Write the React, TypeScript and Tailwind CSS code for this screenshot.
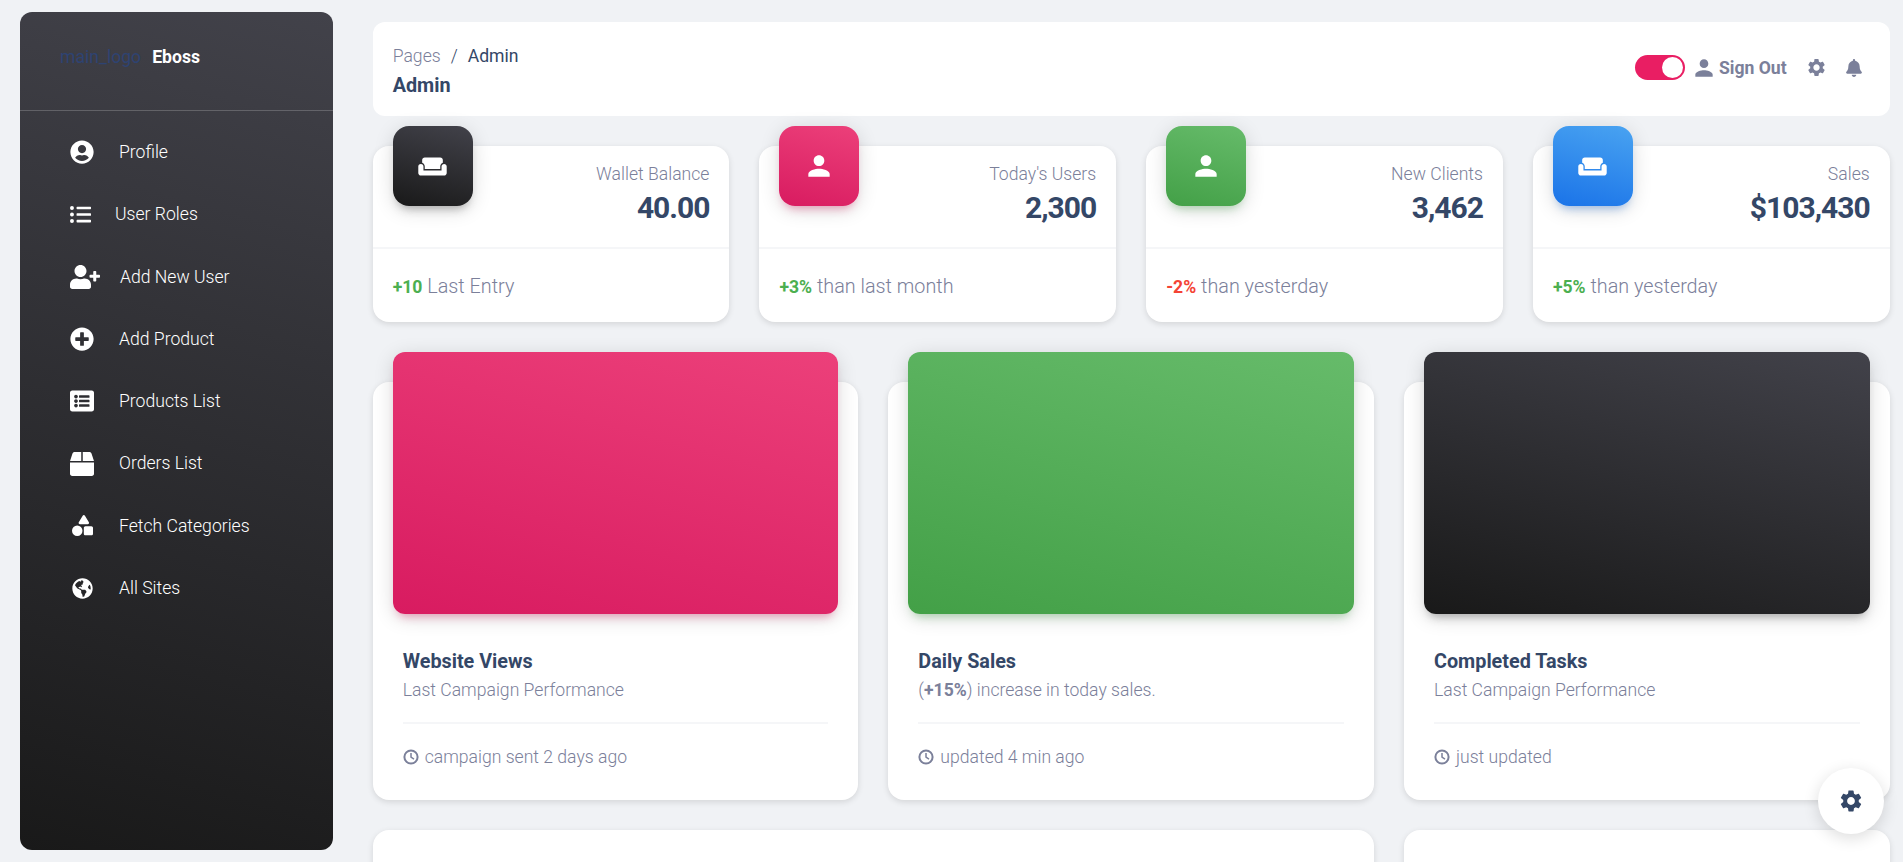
import React from "react";
import type { ReactNode } from "react";
import { FaUserCircle, FaListUl, FaUserPlus, FaPlusCircle, FaListAlt, FaBox, FaGlobeAmericas, FaBell } from "react-icons/fa";
import { FaShapes } from "react-icons/fa6";
import { MdWeekend, MdPerson, MdSettings } from "react-icons/md";

const navItems: { label: string; icon: ReactNode; box: string }[] = [
    { label: "Profile", icon: <FaUserCircle size={24} />, box: "w-6 justify-center" },
    { label: "User Roles", icon: <FaListUl size={21} />, box: "w-5 justify-start" },
    { label: "Add New User", icon: <FaUserPlus size={30} />, box: "w-[25px] justify-start" },
    { label: "Add Product", icon: <FaPlusCircle size={24} />, box: "w-6 justify-center" },
    { label: "Products List", icon: <FaListAlt size={24} />, box: "w-6 justify-center" },
    { label: "Orders List", icon: <FaBox size={24} />, box: "w-6 justify-center" },
    { label: "Fetch Categories", icon: <FaShapes size={21} />, box: "w-6 justify-center" },
    { label: "All Sites", icon: <FaGlobeAmericas size={21} />, box: "w-6 justify-center" },
];

function Sidebar() {
    return (
        <aside className="w-[313px] h-[838px] mt-3 ml-5 shrink-0 rounded-xl bg-[linear-gradient(195deg,#42424a,#191919)] text-white">
            <div className="h-[99px] pl-10 pt-[33px] flex items-start gap-[11px] border-b border-white/20">
                <span className="text-[17.6px] font-normal text-[#2e4372] leading-6">main_logo</span>
                <span className="text-[17.6px] font-bold leading-6">Eboss</span>
            </div>
            <nav className="pt-[10px] pl-[50px] flex flex-col">
                {navItems.map((item) => (
                    <div key={item.label} className="h-[62.3px] flex items-center gap-[25px]">
                        <span className={`${item.box} flex shrink-0`}>
                            <span className="shrink-0">{item.icon}</span>
                        </span>
                        <span className="text-[17.6px] font-light">{item.label}</span>
                    </div>
                ))}
            </nav>
        </aside>
    );
}

function Header() {
    return (
        <div className="h-[94px] rounded-xl bg-white pl-5 pr-[27px] flex items-center justify-between">
            <div className="self-start pt-[22px]">
                <div className="text-[17.6px] font-light leading-6 flex gap-[10px]">
                    <span className="text-[#7b809a]">Pages</span>
                    <span className="text-[#344767]">/</span>
                    <span className="text-[#344767] font-normal">Admin</span>
                </div>
                <div className="text-[19.8px] font-bold text-[#344767] leading-[36px]">Admin</div>
            </div>
            <div className="flex items-center text-[#7b809a] -mt-[2px]">
                <span className="w-[50px] h-[25px] rounded-full bg-[#e91e63] flex items-center justify-end pr-[2px]">
                    <span className="w-[21px] h-[21px] rounded-full bg-white"></span>
                </span>
                <MdPerson size={26} className="ml-[6px]" />
                <span className="ml-[2px] text-[17.6px] font-bold">Sign Out</span>
                <MdSettings size={21} className="ml-[19px]" />
                <FaBell size={18} className="ml-[18px]" />
            </div>
        </div>
    );
}

type Stat = { title: string; value: string; delta: string; deltaColor: string; rest: string; icon: ReactNode; bg: string };

const stats: Stat[] = [
    { title: "Wallet Balance", value: "40.00", delta: "+10", deltaColor: "text-[#4caf50]", rest: "Last Entry", icon: <MdWeekend size={31} />, bg: "bg-[linear-gradient(195deg,#42424a,#191919)] shadow-[0_4px_20px_rgba(0,0,0,0.14),0_7px_10px_-5px_rgba(64,64,64,0.4)]" },
    { title: "Today's Users", value: "2,300", delta: "+3%", deltaColor: "text-[#4caf50]", rest: "than last month", icon: <MdPerson size={32} />, bg: "bg-[linear-gradient(195deg,#ec407a,#d81b60)] shadow-[0_4px_20px_rgba(0,0,0,0.14),0_7px_10px_-5px_rgba(233,30,99,0.4)]" },
    { title: "New Clients", value: "3,462", delta: "-2%", deltaColor: "text-[#f44335]", rest: "than yesterday", icon: <MdPerson size={32} />, bg: "bg-[linear-gradient(195deg,#66bb6a,#43a047)] shadow-[0_4px_20px_rgba(0,0,0,0.14),0_7px_10px_-5px_rgba(76,175,80,0.4)]" },
    { title: "Sales", value: "$103,430", delta: "+5%", deltaColor: "text-[#4caf50]", rest: "than yesterday", icon: <MdWeekend size={31} />, bg: "bg-[linear-gradient(195deg,#49a3f1,#1a73e8)] shadow-[0_4px_20px_rgba(0,0,0,0.14),0_7px_10px_-5px_rgba(26,115,232,0.4)]" },
];

function StatCard({ s }: { s: Stat }) {
    return (
        <div className="h-[176px] rounded-2xl bg-white shadow-[0_2px_6px_rgba(0,0,0,0.12)] flex flex-col">
            <div className="h-[103px] border-b-2 border-[#f5f6f8] pl-5 pr-5 flex justify-between">
                <div className={`w-20 h-20 -mt-5 rounded-2xl text-white flex items-center justify-center ${s.bg}`}>{s.icon}</div>
                <div className="text-right pt-[16px]">
                    <div className="text-[17.6px] font-light text-[#7b809a] leading-6">{s.title}</div>
                    <div className="text-[30px] tracking-[-1px] font-bold text-[#344767] leading-[46px] -mt-px">{s.value}</div>
                </div>
            </div>
            <div className="pl-5 pt-[24px] text-[19.8px] font-light text-[#7b809a] leading-7">
                <span className={`${s.deltaColor} text-[17.6px] font-bold`}>{s.delta}</span> {s.rest}
            </div>
        </div>
    );
}

type Chart = { title: string; sub: ReactNode; foot: string; bg: string };

const charts: Chart[] = [
    { title: "Website Views", sub: "Last Campaign Performance", foot: "campaign sent 2 days ago", bg: "bg-[linear-gradient(195deg,#ec407a,#d81b60)] shadow-[0_4px_20px_rgba(0,0,0,0.14),0_7px_10px_-5px_rgba(233,30,99,0.4)]" },
    { title: "Daily Sales", sub: <>(<b className="font-bold">+15%</b>) increase in today sales.</>, foot: "updated 4 min ago", bg: "bg-[linear-gradient(195deg,#66bb6a,#43a047)] shadow-[0_4px_20px_rgba(0,0,0,0.14),0_7px_10px_-5px_rgba(76,175,80,0.4)]" },
    { title: "Completed Tasks", sub: "Last Campaign Performance", foot: "just updated", bg: "bg-[linear-gradient(195deg,#42424a,#191919)] shadow-[0_4px_20px_rgba(0,0,0,0.14),0_7px_10px_-5px_rgba(64,64,64,0.4)]" },
];

function ClockIcon() {
    return (
        <svg width="16" height="16" viewBox="0 0 16 16" fill="none" stroke="currentColor" strokeWidth="2" className="shrink-0">
            <circle cx="8" cy="8" r="6.6" />
            <path d="M8 4v4.2l3 1.9" strokeWidth="1.5" />
        </svg>
    );
}

function ChartCard({ c }: { c: Chart }) {
    return (
        <div className="h-[418px] rounded-2xl bg-white shadow-[0_2px_6px_rgba(0,0,0,0.12)] px-5">
            <div className={`h-[262px] -mt-[30px] rounded-xl ${c.bg}`}></div>
            <div className="px-[10px] pt-[36px]">
                <div className="text-[19.8px] font-bold text-[#344767] leading-6">{c.title}</div>
                <div className="text-[17.6px] font-light text-[#7b809a] leading-6 mt-[4px]">{c.sub}</div>
                <div className="border-t-2 border-[#f5f6f8] mt-[20px] pt-[21px] flex items-center gap-[6px] text-[17.6px] font-light text-[#7b809a] leading-6">
                    <ClockIcon />
                    {c.foot}
                </div>
            </div>
        </div>
    );
}

export default function App() {
    return (
        <div className="relative h-screen overflow-hidden flex bg-[#f0f2f5] font-['Roboto',sans-serif]">
            <Sidebar />
            <main className="ml-[39.7px] mt-[22px] w-[1517px] shrink-0">
                <Header />
                <div className="grid grid-cols-4 gap-[30px] mt-[30px]">
                    {stats.map((s) => (
                        <StatCard key={s.title} s={s} />
                    ))}
                </div>
                <div className="grid grid-cols-3 gap-[30px] mt-[60px]">
                    {charts.map((c) => (
                        <ChartCard key={c.title} c={c} />
                    ))}
                </div>
                <div className="grid grid-cols-3 gap-[30px] mt-[30px]">
                    <div className="col-span-2 h-[300px] rounded-2xl bg-white shadow-[0_2px_6px_rgba(0,0,0,0.12)]"></div>
                    <div className="h-[300px] rounded-2xl bg-white shadow-[0_2px_6px_rgba(0,0,0,0.12)]"></div>
                </div>
            </main>
            <button className="absolute left-[1818px] top-[768px] w-[66px] h-[66px] rounded-full bg-white text-[#344767] flex items-center justify-center shadow-[0_4px_16px_rgba(0,0,0,0.14)]">
                <MdSettings size={26} />
            </button>
        </div>
    );
}
